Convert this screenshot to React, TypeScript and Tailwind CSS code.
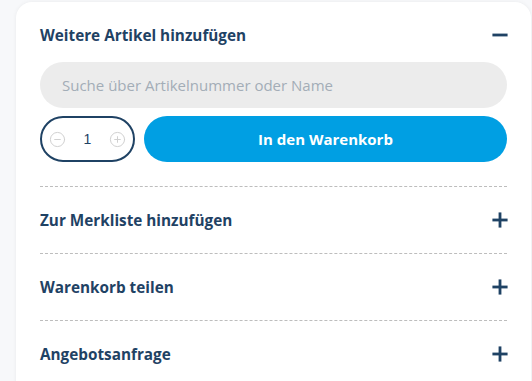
import { Minus, Plus, CircleMinus, CirclePlus } from 'lucide-react'

const font = { fontFamily: '"Open Sans", "Noto Sans", sans-serif' }

function Row({ label }: { label: string }) {
  return (
    <div className="border-t border-dashed border-[#bdbdbd] h-[67px] flex items-center justify-between">
      <span className="text-[15.3px] font-bold text-[#1f4264]">{label}</span>
      <Plus className="w-[26px] h-[26px] text-[#1f4264] -mr-[6px]" strokeWidth={2.6} strokeLinecap="butt" />
    </div>
  )
}

export default function App() {
  return (
    <div className="w-[532px] h-[381px] bg-[#f7f8fa] overflow-hidden" style={font}>
      <div className="ml-4 mt-[2px] w-[515px] h-[400px] bg-white rounded-2xl shadow-[0_0_4px_rgba(0,0,0,0.06)] px-6 pt-[20px]">
        <div className="flex items-center justify-between h-[26px]">
          <span className="text-[15.3px] font-bold text-[#1f4264]">Weitere Artikel hinzufügen</span>
          <Minus className="w-[26px] h-[26px] text-[#1f4264] -mr-[6px]" strokeWidth={2.6} strokeLinecap="butt" />
        </div>
        <div className="mt-[14px] h-[46px] rounded-full bg-[#ececec] flex items-center px-[22px]">
          <span className="text-[15px] text-[#a3adb7]">Suche über Artikelnummer oder Name</span>
        </div>
        <div className="mt-2 flex gap-[9px] h-[46px]">
          <div className="w-[95px] rounded-full border-2 border-[#1f4264] flex items-center justify-between px-[7px]">
            <CircleMinus className="w-[17px] h-[17px] text-[#cfcfcf]" strokeWidth={1.4} />
            <span className="text-[14px] text-[#1f4264]" style={{ fontFamily: '"Liberation Sans", Arial, sans-serif' }}>1</span>
            <CirclePlus className="w-[17px] h-[17px] text-[#cfcfcf]" strokeWidth={1.4} />
          </div>
          <button className="flex-1 rounded-full bg-[#009fe3] text-white text-[15px] font-bold">In den Warenkorb</button>
        </div>
        <div className="mt-[24px]">
          <Row label="Zur Merkliste hinzufügen" />
          <Row label="Warenkorb teilen" />
          <Row label="Angebotsanfrage" />
        </div>
      </div>
    </div>
  )
}
